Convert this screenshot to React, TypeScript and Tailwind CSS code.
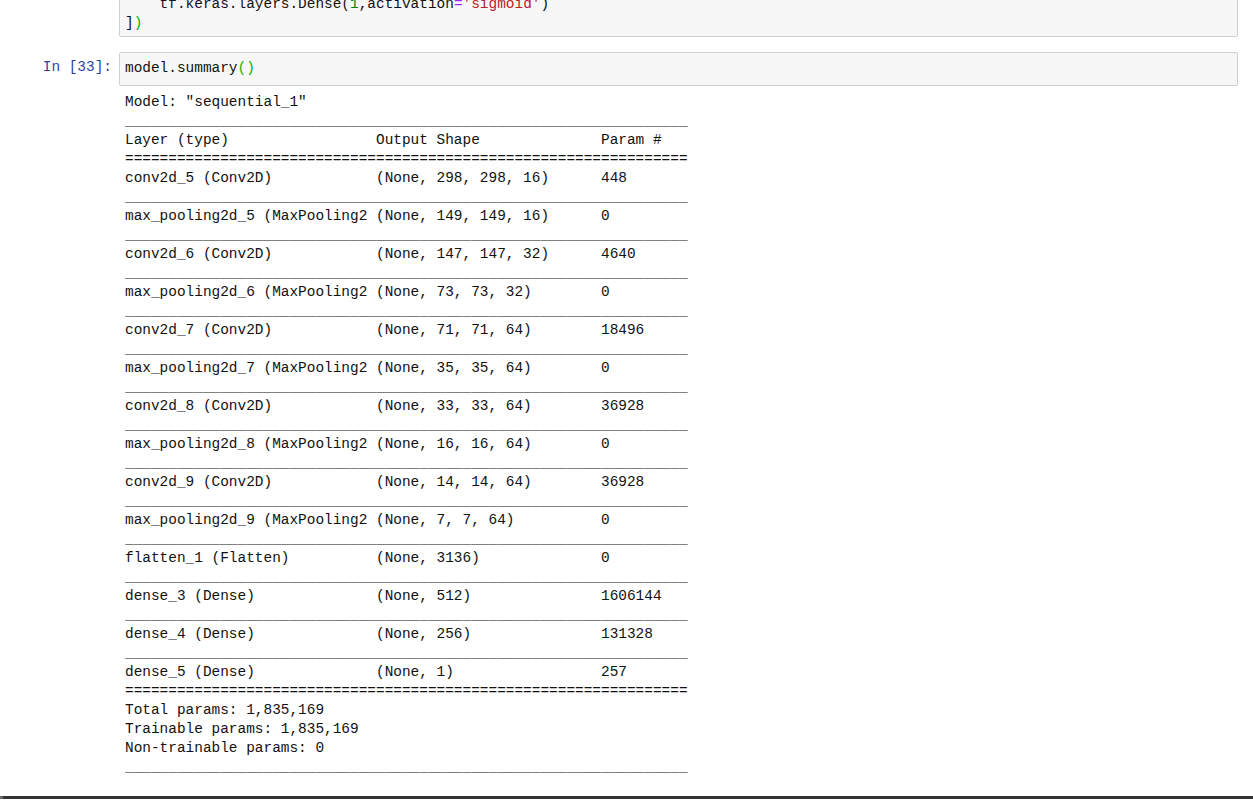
import React from "react";

const mono = { fontFamily: '"Liberation Mono", "DejaVu Sans Mono", monospace' };

const layers: [string, string, string][] = [
  ["conv2d_5 (Conv2D)", "(None, 298, 298, 16)", "448"],
  ["max_pooling2d_5 (MaxPooling2", "(None, 149, 149, 16)", "0"],
  ["conv2d_6 (Conv2D)", "(None, 147, 147, 32)", "4640"],
  ["max_pooling2d_6 (MaxPooling2", "(None, 73, 73, 32)", "0"],
  ["conv2d_7 (Conv2D)", "(None, 71, 71, 64)", "18496"],
  ["max_pooling2d_7 (MaxPooling2", "(None, 35, 35, 64)", "0"],
  ["conv2d_8 (Conv2D)", "(None, 33, 33, 64)", "36928"],
  ["max_pooling2d_8 (MaxPooling2", "(None, 16, 16, 64)", "0"],
  ["conv2d_9 (Conv2D)", "(None, 14, 14, 64)", "36928"],
  ["max_pooling2d_9 (MaxPooling2", "(None, 7, 7, 64)", "0"],
  ["flatten_1 (Flatten)", "(None, 3136)", "0"],
  ["dense_3 (Dense)", "(None, 512)", "1606144"],
  ["dense_4 (Dense)", "(None, 256)", "131328"],
  ["dense_5 (Dense)", "(None, 1)", "257"],
];

const row = (a: string, b: string, c: string) => a.padEnd(29) + b.padEnd(26) + c;
const under = "_".repeat(65);
const eq = "=".repeat(65);

function buildSummary() {
  const out: string[] = ['Model: "sequential_1"', under, row("Layer (type)", "Output Shape", "Param #"), eq];
  layers.forEach(([a, b, c], i) => {
    out.push(row(a, b, c));
    out.push(i === layers.length - 1 ? eq : under);
  });
  out.push("Total params: 1,835,169", "Trainable params: 1,835,169", "Non-trainable params: 0", under);
  return out.join("\n");
}

function Prompt({ label }: { label?: string }) {
  return (
    <div className="w-[119px] shrink-0 pr-[7px] pt-[6px] text-right text-[#303F9F] text-[14.43px] leading-[19px]" style={mono}>
      {label}
    </div>
  );
}

export default function App() {
  return (
    <div className="h-[809px] flex flex-col bg-white overflow-hidden text-[#111]">
      <div className="flex mt-[-12px]">
        <Prompt />
        <div
          className="flex-1 mr-[15px] bg-[#f7f7f7] border border-[#cfcfcf] rounded-[2px] pl-[5px] pt-[6px] pb-[3px] text-[14.43px] leading-[19px] whitespace-pre"
          style={mono}
        >
          <div>
            {"    tf.keras.layers.Dense("}
            <span className="text-[#008000]">1</span>,activation
            <span className="text-[#AA22FF]">=</span>
            <span className="text-[#BA2121]">'sigmoid'</span>)
          </div>
          <div>
            ]<span className="text-[#00bb00]">)</span>
          </div>
        </div>
      </div>

      <div className="flex mt-[15px]">
        <Prompt label="In [33]:" />
        <div
          className="flex-1 mr-[15px] h-[34px] bg-[#f7f7f7] border border-[#cfcfcf] rounded-[2px] pl-[5px] pt-[6px] text-[14.43px] leading-[19px] whitespace-pre"
          style={mono}
        >
          model.summary<span className="text-[#00bb00]">()</span>
        </div>
      </div>

      <div className="flex mt-[7px]">
        <div className="w-[125px] shrink-0" />
        <pre className="text-[14.43px] leading-[19px] m-0" style={mono}>
          {buildSummary()}
        </pre>
      </div>

      <div className="mt-auto mb-[10px] h-[3px] bg-[#353535] flex">
        <div className="w-[3px] h-full bg-[#6b6b6b]" />
      </div>
    </div>
  );
}
